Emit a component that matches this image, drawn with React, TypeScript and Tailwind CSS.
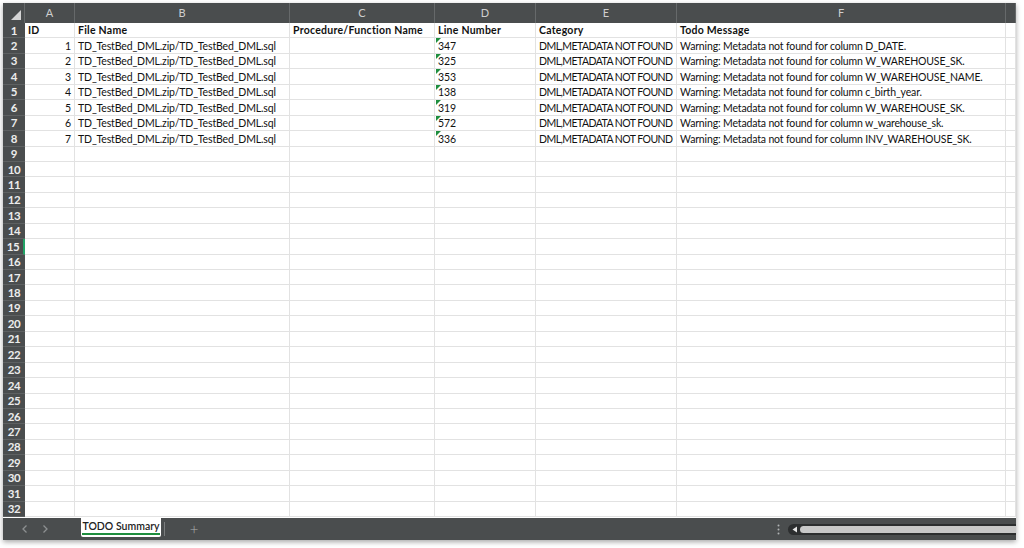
import React from 'react';

const cols = ['A', 'B', 'C', 'D', 'E', 'F', ''];
const widths = ['w-[50px]', 'w-[215px]', 'w-[145px]', 'w-[101px]', 'w-[141px]', 'w-[329px]', 'flex-1'];

const rows = [
    { id: 1, line: '347', col: 'D_DATE' },
    { id: 2, line: '325', col: 'W_WAREHOUSE_SK' },
    { id: 3, line: '353', col: 'W_WAREHOUSE_NAME' },
    { id: 4, line: '138', col: 'c_birth_year' },
    { id: 5, line: '319', col: 'W_WAREHOUSE_SK' },
    { id: 6, line: '572', col: 'w_warehouse_sk' },
    { id: 7, line: '336', col: 'INV_WAREHOUSE_SK' },
];

function Cell({ w, children, right, flag }: { w: string; children?: React.ReactNode; right?: boolean; flag?: boolean }) {
    return (
        <div className={`${w} relative h-full border-r border-b border-[#e2e2e2] flex items-end px-[3px] overflow-hidden whitespace-nowrap leading-[13px] ${right ? 'justify-end' : ''}`}>
            {flag && (
                <span className="absolute left-[1px] top-0 w-0 h-0 border-t-[5px] border-t-[#1e8e3e] border-r-[5px] border-r-transparent" />
            )}
            {children}
        </div>
    );
}

function RowHead({ n, active }: { n: number; active?: boolean }) {
    return (
        <div className={`w-[22px] h-full bg-[#4a4d4e] border-b border-[#5e6162] flex items-center justify-center text-[11.5px] font-bold text-[#ececec] tracking-[-0.3px] ${active ? 'border-r-2 border-r-[#21a366]' : ''}`}>
            {n}
        </div>
    );
}

function Head({ children }: { children: React.ReactNode }) {
    return <b className="tracking-[0.25px]">{children}</b>;
}

export default function App() {
    const total = 32;

    return (
        <div className="w-[1024px] h-[548px] bg-white overflow-hidden" style={{ fontFamily: 'Lato, "Liberation Sans", sans-serif' }}>
            <div className="ml-[3px] mt-[3px] w-[1013px] h-[537px] flex flex-col shadow-[0_2px_5px_rgba(0,0,0,0.35)]">
                {/* column headers */}
                <div className="h-[20px] flex bg-[#4a4d4e] shrink-0">
                    <div className="w-[22px] h-full border-r border-[#66696a] relative">
                        <span className="absolute right-[3px] bottom-[3px] w-0 h-0 border-l-[10px] border-l-transparent border-b-[10px] border-b-[#d4d4d4]" />
                    </div>
                    {cols.map((c, i) => (
                        <div key={i} className={`${widths[i]} h-full border-r border-[#66696a] flex items-center justify-center text-[11px] text-[#cfcfcf]`}>
                            {c}
                        </div>
                    ))}
                </div>

                {/* grid */}
                <div className="flex-1 flex flex-col text-[10.5px] tracking-[-0.15px] text-[#111] bg-white">
                    {Array.from({ length: total }).map((_, idx) => {
                        const n = idx + 1;
                        const r = rows[idx - 1];
                        return (
                            <div key={n} className="h-[15.45px] flex shrink-0">
                                <RowHead n={n} active={n === 15} />
                                {n === 1 ? (
                                    <>
                                        <Cell w={widths[0]}><Head>ID</Head></Cell>
                                        <Cell w={widths[1]}><Head>File Name</Head></Cell>
                                        <Cell w={widths[2]}><Head>Procedure/Function Name</Head></Cell>
                                        <Cell w={widths[3]}><Head>Line Number</Head></Cell>
                                        <Cell w={widths[4]}><Head>Category</Head></Cell>
                                        <Cell w={widths[5]}><Head>Todo Message</Head></Cell>
                                        <Cell w={widths[6]} />
                                    </>
                                ) : r ? (
                                    <>
                                        <Cell w={widths[0]} right>{r.id}</Cell>
                                        <Cell w={widths[1]}>TD_TestBed_DML.zip/TD_TestBed_DML.sql</Cell>
                                        <Cell w={widths[2]} />
                                        <Cell w={widths[3]} flag>{r.line}</Cell>
                                        <Cell w={widths[4]}><span className="tracking-[-0.55px]">DML,METADATA NOT FOUND</span></Cell>
                                        <Cell w={widths[5]}>Warning: Metadata not found for column {r.col}.</Cell>
                                        <Cell w={widths[6]} />
                                    </>
                                ) : (
                                    widths.map((w, i) => <Cell key={i} w={w} />)
                                )}
                            </div>
                        );
                    })}
                </div>

                {/* sheet tabs */}
                <div className="h-[22px] shrink-0 bg-[#4a4d4e] flex items-stretch">
                    <div className="w-[78px] flex items-center pl-[18px] gap-[12px] text-[#8d9091]">
                        <svg width="8" height="10" viewBox="0 0 8 10"><path d="M5.5 1.5 L2 5 L5.5 8.5" stroke="currentColor" strokeWidth="1.3" fill="none" /></svg>
                        <svg width="8" height="10" viewBox="0 0 8 10"><path d="M2.5 1.5 L6 5 L2.5 8.5" stroke="currentColor" strokeWidth="1.3" fill="none" /></svg>
                    </div>
                    <div className="w-[80px] mb-[3px] bg-white rounded-b-[2px] flex items-center justify-center">
                        <span className="text-[10.5px] font-semibold text-[#222] border-b-2 border-[#1e8e3e] leading-[13px] whitespace-nowrap">TODO Summary</span>
                    </div>
                    <div className="w-px my-[4px] ml-[3px] bg-[#7a7d7e]" />
                    <div className="w-[58px] flex items-center justify-center text-[#aeb1b2] text-[15px] font-light">+</div>
                    <div className="flex-1" />
                    <div className="w-[12px] flex items-center justify-center">
                        <svg width="3" height="11" viewBox="0 0 3 11"><circle cx="1.5" cy="1.5" r="1" fill="#b0b3b4" /><circle cx="1.5" cy="5.5" r="1" fill="#b0b3b4" /><circle cx="1.5" cy="9.5" r="1" fill="#b0b3b4" /></svg>
                    </div>
                    <div className="w-[228px] ml-[4px] flex items-center">
                        <div className="w-full h-[11px] bg-[#2c2e2f] rounded-l-full flex items-center pl-[4px] gap-[2px]">
                            <svg width="6" height="7" viewBox="0 0 6 7"><path d="M5 0.5 L0.5 3.5 L5 6.5 Z" fill="#e6e6e6" /></svg>
                            <div className="flex-1 h-[7px] bg-[#c8c8c8] rounded-l-full" />
                        </div>
                    </div>
                </div>
            </div>
        </div>
    );
}
